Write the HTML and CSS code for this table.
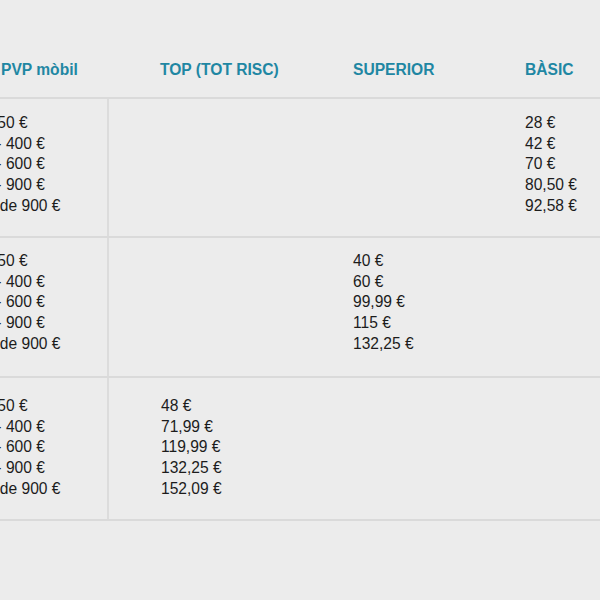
FILE: index.html
```html
<!DOCTYPE html>
<html lang="ca">
<head>
<meta charset="utf-8">
<title>Tarifes</title>
<link rel="stylesheet" href="styles.css">
</head>
<body>
<div class="frame">
<table class="rates">
  <colgroup>
    <col class="c1"><col class="c2"><col class="c3"><col class="c4">
  </colgroup>
  <thead>
    <tr>
      <th class="first">PVP mòbil</th>
      <th>TOP (TOT RISC)</th>
      <th>SUPERIOR</th>
      <th>BÀSIC</th>
    </tr>
  </thead>
  <tbody>
    <tr class="r1">
      <td class="first">0 - 150 €<br>150 - 400 €<br>400 - 600 €<br>600 - 900 €<br>Més de 900 €</td>
      <td></td>
      <td></td>
      <td>28 €<br>42 €<br>70 €<br>80,50 €<br>92,58 €</td>
    </tr>
    <tr class="r2">
      <td class="first">0 - 150 €<br>150 - 400 €<br>400 - 600 €<br>600 - 900 €<br>Més de 900 €</td>
      <td></td>
      <td>40 €<br>60 €<br>99,99 €<br>115 €<br>132,25 €</td>
      <td></td>
    </tr>
    <tr class="r3">
      <td class="first">0 - 150 €<br>150 - 400 €<br>400 - 600 €<br>600 - 900 €<br>Més de 900 €</td>
      <td>48 €<br>71,99 €<br>119,99 €<br>132,25 €<br>152,09 €</td>
      <td></td>
      <td></td>
    </tr>
  </tbody>
</table>
</div>
</body>
</html>
```
FILE: styles.css
```css
html, body {
  margin: 0;
  padding: 0;
  background: #ececec;
}
.frame {
  width: 600px;
  height: 600px;
  overflow: hidden;
  padding-top: 40px;
  box-sizing: border-box;
}
.rates {
  border-collapse: collapse;
  table-layout: fixed;
  width: 644px;
  margin-left: -44px;
  font-family: "Liberation Sans", Arial, sans-serif;
  font-size: 15.6px;
  line-height: 20.8px;
  color: #1c1c1c;
}
.c1 { width: 152px; }
.c2 { width: 193px; }
.c3 { width: 172px; }
.c4 { width: 127px; }
.rates th {
  text-align: left;
  font-weight: bold;
  color: #1f87a3;
  padding: 20px 0 16px 52px;
  border-bottom: 2px solid #dadada;
  vertical-align: middle;
}
.rates th.first {
  padding-left: 45px;
}
.rates td {
  text-align: left;
  vertical-align: top;
  padding: 14px 0 19px 52px;
  border-bottom: 2px solid #dadada;
}
.rates .r2 td {
  padding-top: 13px;
  padding-bottom: 21px;
}
.rates .r3 td {
  padding-top: 18px;
  padding-bottom: 19px;
}
.rates td.first {
  padding-left: 10px;
  border-right: 2px solid #dcdcdc;
}
```
